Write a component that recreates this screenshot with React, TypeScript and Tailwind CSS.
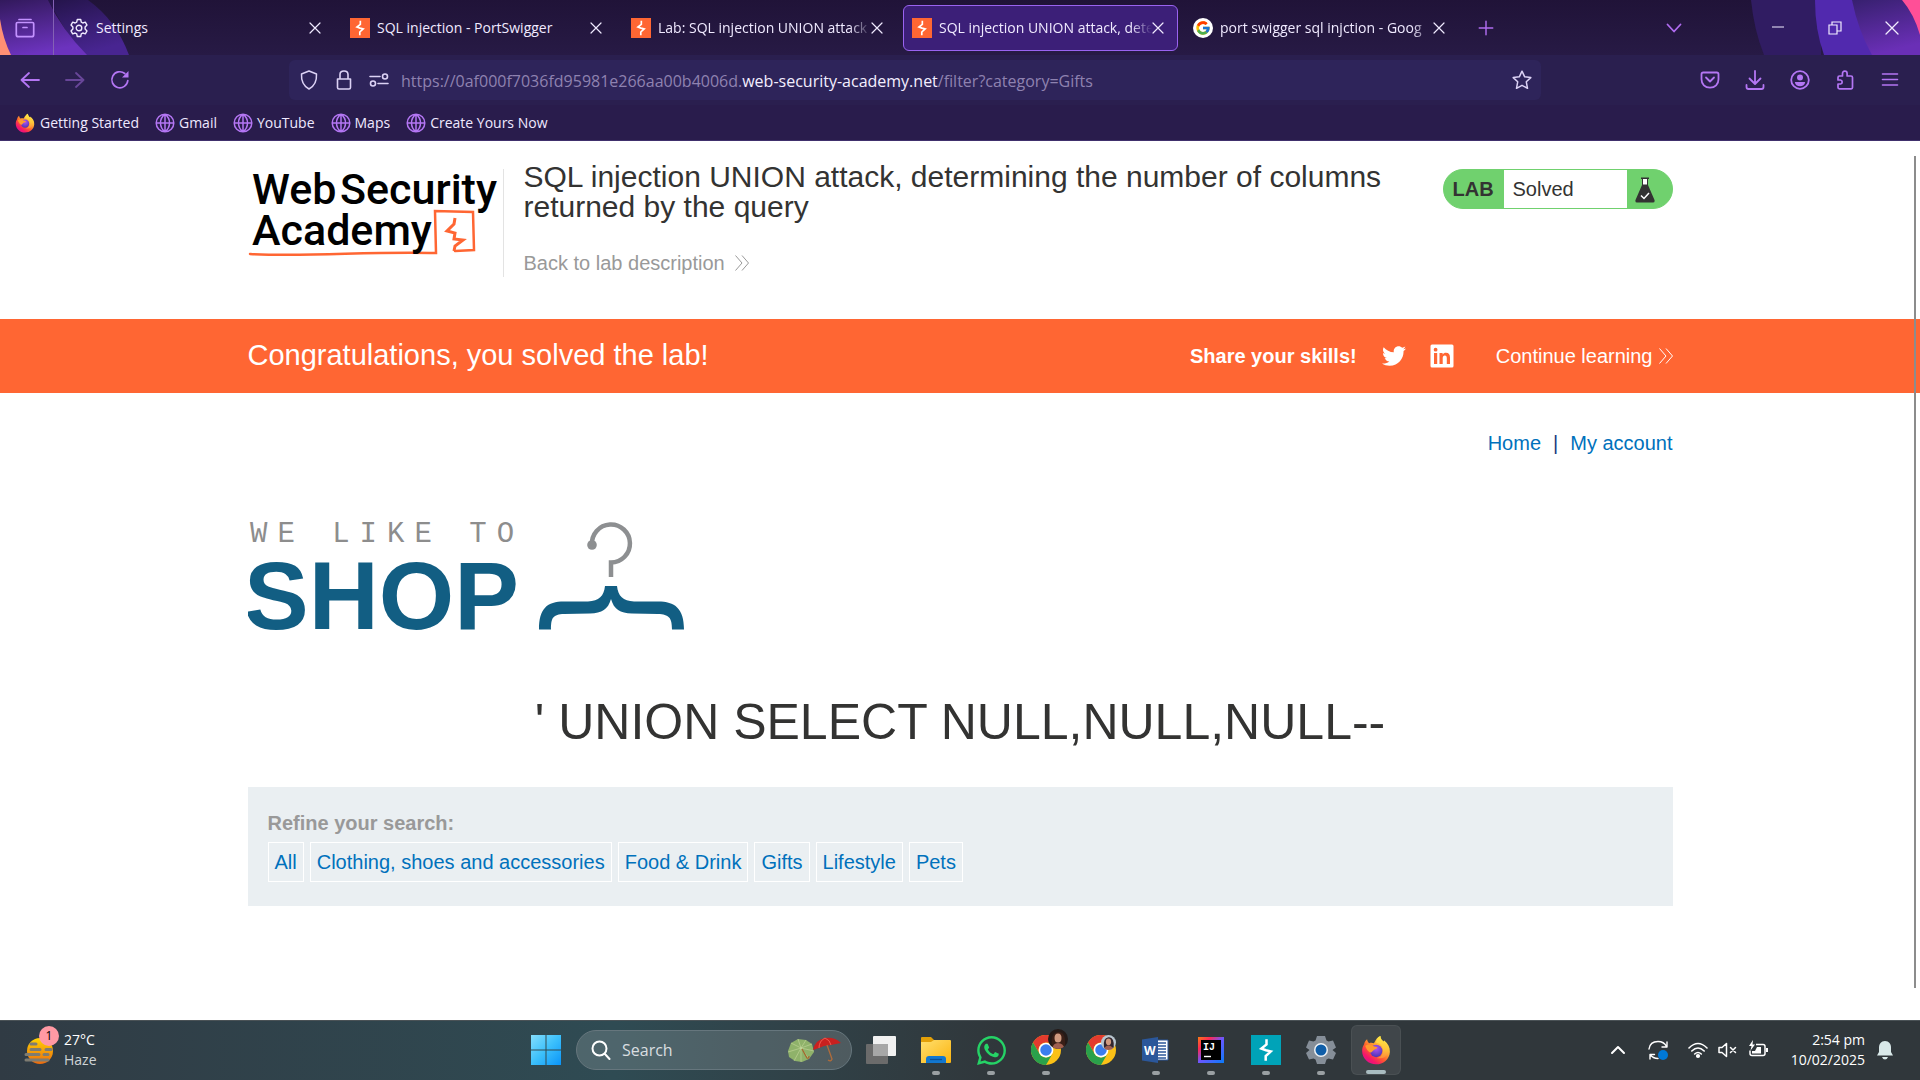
import React, { useId } from "react";
import { FcGoogle } from "react-icons/fc";
import { FaTwitter, FaWhatsapp } from "react-icons/fa";

const UI = "font-['Open_Sans','Noto_Sans',sans-serif]";

type SvgProps = { className?: string };

function Bolt({ className = "", bg = "#ff6633" }: SvgProps & { bg?: string }) {
  return (
    <svg viewBox="0 0 30 30" className={className} aria-hidden="true">
      <rect width="30" height="30" fill={bg} />
      <path d="M15.500 4.200V9.500L10.400 13.600 15 15.200 19.800 16.400 14.700 21V25.800" fill="none" stroke="#fff" strokeWidth="2.500" strokeLinejoin="miter" />
    </svg>
  );
}

function Firefox({ className = "" }: SvgProps) {
  const id = useId();
  return (
    <svg viewBox="0 0 32 32" className={className} aria-hidden="true">
      <defs>
        <linearGradient id={id + "a"} x1="0.85" y1="0.1" x2="0.2" y2="0.95">
          <stop offset="0" stopColor="#fff44f" />
          <stop offset="0.35" stopColor="#ffa930" />
          <stop offset="0.6" stopColor="#ff5a2e" />
          <stop offset="0.85" stopColor="#f5156c" />
          <stop offset="1" stopColor="#e0128a" />
        </linearGradient>
        <radialGradient id={id + "b"} cx="0.5" cy="0.3" r="0.7">
          <stop offset="0" stopColor="#b254f0" />
          <stop offset="1" stopColor="#4a35b5" />
        </radialGradient>
        <linearGradient id={id + "c"} x1="0.5" y1="0" x2="0.5" y2="1">
          <stop offset="0" stopColor="#ffe847" />
          <stop offset="0.6" stopColor="#ffc43a" />
          <stop offset="1" stopColor="#ff8a3a" />
        </linearGradient>
      </defs>
      <path d="M6.500 4.500c.2 2 1 3.200 2.300 4.200 1.600-.6 3.200-.5 5 .2C15.500 5.500 17.500 2 20.700 1c-.3 3 1.300 4.500 3.300 6.500.5-.4.600-1.100.500-2 4.200 3.500 6.500 7.500 6.300 12.500C30.300 26 23.800 31.200 16 31.200S1.200 25.200 1.200 17c0-3 .8-5.200 2.100-7.200.3-2 1.500-4 3.200-5.300z" fill={`url(#${id}a)`} />
      <circle cx="16.200" cy="17" r="6.600" fill={`url(#${id}b)`} />
      <path d="M20.700 1c-3.700 1.700-4.300 5-4.600 7.200 4.500.3 7.400 3.600 7.400 8 0 5.400-3 7.800-6.700 8.300 6 1.300 11-1.500 12.500-6.500 1-4-.8-7.500-4.300-10.500-2.500-2-4-3.500-4.300-6.500z" fill={`url(#${id}c)`} />
      <path d="M4.500 11.500c3-2.200 6.500-1.800 8.500.2 1.700 1 3 .8 4.500 1.300-.3 1.500-2 2-3.500 2.700-1.800 1.300-2.500 3.300-3.800 3-2.200-.5-4.700-3.700-5.700-7.200z" fill="#ff9a2e" />
    </svg>
  );
}

function Chrome({ className = "" }: SvgProps) {
  return (
    <svg viewBox="0 0 48 48" className={className} aria-hidden="true">
      <circle cx="24" cy="24" r="24" fill="#fbc116" />
      <path d="M3.200 12A24 24 0 0 1 44.800 12H24a12 12 0 0 0-10.400 18z" fill="#e33b2e" />
      <path d="M3.200 12A24 24 0 0 0 24 48L34.400 30A12 12 0 0 1 13.600 30z" fill="#2aa14b" />
      <circle cx="24" cy="24" r="11.800" fill="#fff" />
      <circle cx="24" cy="24" r="9.200" fill="#3b7ded" />
    </svg>
  );
}

function Line({ className = "", d, w = 1.5, box = 20 }: SvgProps & { d: string; w?: number; box?: number }) {
  return (
    <svg viewBox={`0 0 ${box} ${box}`} className={className} fill="none" stroke="currentColor" strokeWidth={w} strokeLinecap="round" strokeLinejoin="round" aria-hidden="true">
      <path d={d} />
    </svg>
  );
}

const GEAR = "M8.300 1.500h3.400l.6 2.600 1.500.9 2.500-.8 1.700 2.900-1.900 1.900v2l1.900 1.900-1.700 2.900-2.500-.8-1.500.9-.6 2.600H8.300l-.6-2.600-1.500-.9-2.500.8L2 12.900 3.900 11V9L2 7.100l1.700-2.900 2.500.8 1.500-.9zM10 7.200a2.800 2.800 0 1 0 0 5.600 2.800 2.800 0 0 0 0-5.600z";
const GLOBE = "M10 1.200a8.800 8.800 0 1 0 0 17.600 8.800 8.800 0 0 0 0-17.600zM1.200 10h17.600M10 1.200c-6 4.500-6 13.100 0 17.600M10 1.200c6 4.500 6 13.100 0 17.600M10 1.200v17.600";

type TabInfo = { title: string; icon: React.ReactNode; active?: boolean };

const tabs: TabInfo[] = [
  { title: "Settings", icon: <Line d={GEAR} w={1.4} className="size-5" /> },
  { title: "SQL injection - PortSwigger", icon: <Bolt className="size-5" /> },
  { title: "Lab: SQL injection UNION attack", icon: <Bolt className="size-5" /> },
  { title: "SQL injection UNION attack, dete", icon: <Bolt className="size-5" />, active: true },
  {
    title: "port swigger sql injction - Goog",
    icon: (
      <span className="flex size-5 items-center justify-center rounded-full bg-white">
        <FcGoogle className="size-4" />
      </span>
    ),
  },
];

function TabBar() {
  return (
    <div className="relative flex h-[55px] items-center bg-linear-to-b from-[#201338] to-[#271a45]">
      <svg className="absolute top-0 left-0 h-[55px] w-[160px]" viewBox="0 0 160 55" aria-hidden="true">
        <defs>
          <linearGradient id="l1" x1="0" y1="0" x2="0.3" y2="1">
            <stop offset="0" stopColor="#32195c" />
            <stop offset="1" stopColor="#6c33be" />
          </linearGradient>
          <linearGradient id="l2" x1="0" y1="0" x2="0.4" y2="1">
            <stop offset="0" stopColor="#24144a" />
            <stop offset="1" stopColor="#482591" />
          </linearGradient>
        </defs>
        <path d="M48 0h40q28 20 41 55H80z" fill="url(#l2)" />
        <path d="M0 0h48q14 30 39 55H0z" fill="url(#l1)" />
        <path d="M0 19q3 20 11 36H0z" fill="#ff8f74" />
      </svg>
      <svg className="absolute top-0 right-0 h-[55px] w-[180px]" viewBox="0 0 180 55" aria-hidden="true">
        <defs>
          <linearGradient id="r1" x1="0" y1="0" x2="0.3" y2="1">
            <stop offset="0" stopColor="#37206f" />
            <stop offset="1" stopColor="#6a2fb6" />
          </linearGradient>
        </defs>
        <path d="M11 0h70v55H24Q14 30 11 0z" fill="#301c62" />
        <path d="M75 0h45l20 55H84Q75 30 75 0z" fill="#5129ae" />
        <path d="M112 0h68v55h-48Q118 30 112 0z" fill="url(#r1)" />
        <path d="M162 0h18v35Q174 14 162 0z" fill="#ff4f97" />
      </svg>
      <button aria-label="Firefox View" className="relative flex h-full w-[54px] items-center border-r border-[#8461b5] pl-[15px] text-[#c392ff]">
        <Line className="size-5" w={1.7} d="M4 1.500h12M2.500 4.500h15q1.200 0 1.200 1.200v11q0 2-2 2H3.300q-2 0-2-2v-11q0-1.200 1.200-1.200zM8 9.500h4" />
      </button>
      <div role="tablist" className="relative flex items-center pl-[6px]">
        {tabs.map((t) => (
          <div
            key={t.title}
            className={
              "mr-[6px] flex h-[46px] w-[275px] items-center rounded-md border pr-[13px] pl-2 text-[#f0eaff] " +
              (t.active ? "border-[#9a63f0] bg-[#3c1f78]" : "border-transparent")
            }
          >
            <button role="tab" aria-selected={!!t.active} className="flex min-w-0 flex-1 items-center gap-[7px]">
              <span className="shrink-0">{t.icon}</span>
              <span className={"min-w-0 flex-1 text-left text-sm whitespace-nowrap " + (t.title.length > 30 ? "mask-r-from-90%" : "")}>{t.title}</span>
            </button>
            <button aria-label={"Close " + t.title} className="shrink-0">
              <Line className="size-3" box={12} w={1.2} d="M1 1l10 10M11 1L1 11" />
            </button>
          </div>
        ))}
      </div>
      <button aria-label="New tab" className="relative ml-3 text-[#b06cf0]">
        <Line className="size-[18px]" w={1.6} d="M10 2.500v15M2.500 10h15" />
      </button>
      <div className="relative ml-auto flex items-center text-[#f2edff]">
        <button aria-label="List all tabs" className="mr-[65px] text-[#b06cf0]">
          <Line className="size-5" w={1.8} d="M3.500 6.500l6.500 7 6.500-7" />
        </button>
        <button aria-label="Minimize" className="flex w-[57px] justify-center">
          <Line className="size-3" box={12} w={1.2} d="M0.500 5h11" />
        </button>
        <button aria-label="Restore" className="flex w-[57px] justify-center">
          <svg viewBox="0 0 14 14" className="size-[14px]" fill="none" stroke="currentColor" strokeWidth="1.200" aria-hidden="true">
            <path d="M1 4h8v9H1zM4 4V1h9v9H9" />
          </svg>
        </button>
        <button aria-label="Close" className="flex w-[57px] justify-center">
          <Line className="size-[14px]" box={14} w={1.3} d="M1 1l12 12M13 1L1 13" />
        </button>
      </div>
    </div>
  );
}

function NavBar() {
  return (
    <div className="flex h-[50px] items-center bg-[#2a1f4f] px-5 text-[#b476f4]">
      <button aria-label="Back" className="mr-[25px]"><Line className="size-5" w={1.8} d="M9 3l-7.500 7L9 17M1.500 10h17.500" /></button>
      <button aria-label="Forward" disabled className="mr-[25px] opacity-45"><Line className="size-5" w={1.8} d="M11 3l7.500 7-7.500 7M18.500 10H1" /></button>
      <button aria-label="Reload">
        <svg viewBox="0 0 20 20" className="size-5" fill="none" stroke="currentColor" strokeWidth="1.700" strokeLinecap="round" aria-hidden="true">
          <path d="M17.800 10.500a8 8 0 1 1-3-7" />
          <path d="M18.500 1v6.500H12z" fill="currentColor" stroke="none" />
        </svg>
      </button>
      <div className="relative ml-[159px] flex h-10 w-[1252px] shrink items-center rounded-md bg-[#2e245a] px-2 text-[#dcd2f5]">
        <Line className="mx-[2px] size-5" w={1.5} d="M10 1l7.500 3c.4 7-2 12-7.500 15-5.500-3-7.900-8-7.500-15z" />
        <Line className="mx-[13px] size-5" w={1.6} d="M3.500 9h13v8.500q0 1.500-1.500 1.500H5q-1.500 0-1.500-1.500zM6 9V4.500q0-3.500 4-3.500t4 3.500V9" />
        <Line className="mr-3 ml-[2px] size-5" w={1.6} d="M1 6.500h10M16 4a2.500 2.500 0 1 0 0 5 2.500 2.500 0 0 0 0-5zM9 13.500h10M4 11a2.500 2.500 0 1 0 0 5 2.500 2.500 0 0 0 0-5z" />
        <span className="pt-[2px] text-base whitespace-nowrap text-[#8e82b0]">
          https://0af000f7036fd95981e266aa00b4006d.<span className="text-[#f3eeff]">web-security-academy.net</span>/filter?category=Gifts
        </span>
        <input aria-label="Address" className="absolute inset-y-0 right-12 left-[110px] bg-transparent outline-none" />
        <button aria-label="Bookmark this page" className="mr-[1px] ml-auto">
          <Line className="size-5" w={1.5} d="M10 1.200l2.700 5.600 6.100.8-4.500 4.200 1.200 6.500L10 15.300l-5.500 3 1.200-6.500L1.200 7.600l6.100-.8z" />
        </button>
      </div>
      <div className="ml-auto flex items-center gap-[25px]">
        <button aria-label="Save to Pocket"><Line className="size-5" w={1.8} d="M3.200 2.500h13.600q1.700 0 1.700 1.700v5c0 5-3.500 8.500-8.500 8.500s-8.500-3.500-8.500-8.500v-5q0-1.700 1.700-1.700zM6 7.500l4 4 4-4" /></button>
        <button aria-label="Downloads"><Line className="size-5" w={1.8} d="M10 1v12.500M4.500 8.500l5.500 5.500 5.500-5.500M1.500 15v2q0 2 2 2h13q2 0 2-2v-2" /></button>
        <button aria-label="Account">
          <svg viewBox="0 0 20 20" className="size-5" aria-hidden="true">
            <circle cx="10" cy="10" r="8.800" fill="none" stroke="currentColor" strokeWidth="1.800" />
            <circle cx="10" cy="7.500" r="3" fill="currentColor" />
            <path d="M4.800 12h10.400c-.5 3-2.500 4.300-5.200 4.300S5.300 15 4.800 12z" fill="currentColor" />
          </svg>
        </button>
        <button aria-label="Extensions"><Line className="size-5" w={1.700} d="M7.500 6V3.500q0-2.300 2.300-2.300t2.300 2.300V6H16q1.500 0 1.500 1.500v10q0 1.300-1.300 1.300H4.500q-1.500 0-1.500-1.300V14h2.500q1.700-.2 1.700-1.900T5.500 10H3V7.500Q3 6 4.500 6z" /></button>
        <button aria-label="Menu"><Line className="size-5" w={1.6} d="M2.500 4h15M2.500 9.500h15M2.500 15h15" /></button>
      </div>
    </div>
  );
}

function Bookmarks() {
  return (
    <nav className="flex h-9 items-center gap-4 border-b border-[#40306c] bg-[#291c4c] pl-[15px] text-sm text-[#efe9ff]">
      <a href="#start" className="flex items-center gap-[5px]"><Firefox className="size-5" />Getting Started</a>
      {["Gmail", "YouTube", "Maps", "Create Yours Now"].map((b) => (
        <a key={b} href="#bookmark" className="flex items-center gap-1">
          <Line className="size-5 text-[#b476f4]" w={1.5} d={GLOBE} />
          {b}
        </a>
      ))}
    </nav>
  );
}

function AcademyLogo() {
  return (
    <svg viewBox="0 0 254 100" className="h-[100px] w-[254px] shrink-0" role="img" aria-label="Web Security Academy">
      <path d="M2 85c60 3 120-3 186-1l-1-42 38 1 1 38-19 1" fill="none" stroke="#ff6633" strokeWidth="2.500" strokeLinecap="round" />
      <path d="M207 49l-1 6-7 7 8 2-1 6 9 1-8 6-1 5" fill="none" stroke="#ff6633" strokeWidth="3" />
      <g fill="#000" fontFamily="Roboto, sans-serif" fontWeight="500" fontSize="43">
        <text x="4" y="35">Web</text>
        <text x="92" y="35">Security</text>
        <text x="4" y="76">Academy</text>
      </g>
    </svg>
  );
}

function Chevrons({ className = "" }: SvgProps) {
  return (
    <svg viewBox="0 0 14 16" className={"h-4 w-[14px] " + className} fill="none" stroke="currentColor" strokeWidth="1" aria-hidden="true">
      <path d="M0.500 0.500l6.500 7.500-6.500 7.500M7 0.500l6.500 7.500L7 15.500" />
    </svg>
  );
}

function LabHeader() {
  return (
    <header className="mx-auto flex h-[178px] w-[1425px] max-w-full items-start">
      <div className="mt-[28px] flex h-[108px] w-[256px] shrink-0 border-r border-[#e3e3e3]">
        <AcademyLogo />
      </div>
      <div className="ml-5 min-w-0 flex-1 pt-[21px]">
        <h2 className="max-w-[880px] text-[30px] leading-[30px] text-[#333332]">
          SQL injection UNION attack, determining the number of columns returned by the query
        </h2>
        <a href="#lab" className="mt-[27px] flex items-center gap-[10px] text-[20px] leading-7 text-[#999]">
          Back to lab description <Chevrons />
        </a>
      </div>
      <div className="mt-[28px] flex h-10 w-[230px] shrink-0 overflow-hidden rounded-[20px] border border-[#70d16e] bg-[#70d16e] text-[20px] text-[#333332]">
        <span className="flex w-[60px] items-center pl-[9px] font-bold">LAB</span>
        <span className="flex w-[123px] items-center bg-white pl-[9px]">Solved</span>
        <svg viewBox="0 0 20 26" className="mt-[7px] ml-2 h-[26px] w-5" aria-hidden="true">
          <path d="M7.500 1.500h5V8h-5z" fill="#fff" />
          <path d="M6 .5h8v1.500h-1V8l6.500 15q.6 2.500-1.500 2.500H2Q-.1 25.500.5 23L7 8V2H6zM8 2v5.500h4V2z" fill="#333332" fillRule="evenodd" />
          <path d="M6 18.500l3 3 5-5.500" stroke="#fff" strokeWidth="1.500" fill="none" />
        </svg>
      </div>
    </header>
  );
}

function Banner() {
  return (
    <section className="bg-[#ff6633] text-white">
      <div className="mx-auto flex h-[74px] w-[1425px] max-w-full items-center text-[20px]">
        <h4 className="text-[29px]">Congratulations, you solved the lab!</h4>
        <span className="ml-auto font-bold">Share your skills!</span>
        <a href="#twitter" aria-label="Share on Twitter" className="ml-[25px]"><FaTwitter className="size-6" /></a>
        <a href="#linkedin" aria-label="Share on LinkedIn" className="ml-6">
          <svg viewBox="0 0 24 24" className="size-6" aria-hidden="true">
            <rect x=".5" y=".5" width="23" height="23" rx="1.500" fill="#fff" />
            <path d="M4 9h3.200v11H4zM5.600 3.800a1.900 1.900 0 1 1 0 3.800 1.900 1.900 0 0 1 0-3.800zM9.500 9h3.100v1.500c.8-1.200 1.900-1.800 3.300-1.800 2.900 0 4.100 1.700 4.100 4.900V20h-3.200v-5.800c0-1.800-.5-2.700-1.900-2.700s-2.200 1-2.200 2.700V20H9.500z" fill="#ff6633" />
          </svg>
        </a>
        <a href="#next" className="ml-[42px] flex items-center gap-[6px]">Continue learning <Chevrons /></a>
      </div>
    </section>
  );
}

function ShopLogo() {
  return (
    <svg viewBox="0 0 440 120" className="h-[120px] w-[440px]" role="img" aria-label="We like to shop">
      <text x="2" y="27" fill="#8d8d8d" fontFamily="Liberation Mono, monospace" fontSize="29" letterSpacing="10">WE LIKE TO</text>
      <text x="-4" y="114" fill="#125e83" fontFamily="Liberation Sans, sans-serif" fontWeight="700" fontSize="97">SHOP</text>
      <circle cx="344" cy="30" r="4.800" fill="#8d8f91" />
      <path d="M344 30a19 19 0 1 1 19 17.500V62" fill="none" stroke="#8d8f91" strokeWidth="4.500" />
      <path d="M357 71h12c1 10 6 15 17 15.500h24c17 0 26 7 26 28h-12c0-12-3-15-14-15.500l-26-.5c-12-.5-18-4-21-14.500-3 10.500-9 14-21 14.500l-26 .5c-11 .5-13 3.500-13 15.500h-12c0-21 8-28 25-28h24c11-.5 16-5.500 17-15.500z" fill="#125e83" />
    </svg>
  );
}

function Shop() {
  return (
    <main className="mx-auto w-[1425px] max-w-full text-[20px]">
      <nav className="flex h-[100px] items-center justify-end gap-3 text-[#0071bc]">
        <a href="#home">Home</a>
        <span className="text-[#1c3a80]">|</span>
        <a href="#account">My account</a>
      </nav>
      <div className="mt-[22px]"><ShopLogo /></div>
      <h1 className="mt-[52px] text-center text-[50px] leading-[70px] text-[#333332]">' UNION SELECT NULL,NULL,NULL--</h1>
      <section className="mt-[30px] h-[119px] bg-[#eaeff2] px-5 pt-[22px]">
        <p className="leading-7 font-bold text-[#999]">Refine your search:</p>
        <div className="mt-[5px] flex flex-wrap gap-[6px]">
          {["All", "Clothing, shoes and accessories", "Food & Drink", "Gifts", "Lifestyle", "Pets"].map((f) => (
            <a key={f} href="#filter" className="border border-white px-[6px] leading-[38px] text-[#0071bc]">{f}</a>
          ))}
        </div>
      </section>
    </main>
  );
}

function Explorer() {
  return (
    <svg viewBox="0 0 30 30" className="size-[30px]" aria-hidden="true">
      <defs><linearGradient id="fo" x1="0" y1="0" x2="1" y2="1"><stop offset="0" stopColor="#ffdf6e" /><stop offset="1" stopColor="#fbb40f" /></linearGradient></defs>
      <path d="M0 3q0-1 1-1h9l3 3v5H0z" fill="#e3a008" />
      <path d="M0 7h10l3-2h16q1 0 1 1v21q0 1-1 1H0z" fill="url(#fo)" />
      <path d="M5 28v-4q0-3 3-3h14q3 0 3 3v4z" fill="#1277cf" /><path d="M9 24.500h12" stroke="#0a4f97" strokeWidth="1.300" />
    </svg>
  );
}

function Word() {
  return (
    <svg viewBox="0 0 30 30" className="size-[30px]" aria-hidden="true">
      <path d="M15 5h12v20H15z" fill="#fff" stroke="#2b579a" strokeWidth="1" />
      <path d="M17 8h8M17 11h8M17 14h8M17 17h8M17 20h8M17 23h8" stroke="#2b579a" strokeWidth="1.400" />
      <path d="M1 4.500L17 2v26L1 25.500z" fill="#2b579a" />
      <text x="3" y="20" fill="#fff" fontFamily="Open Sans, sans-serif" fontWeight="700" fontSize="12">W</text>
    </svg>
  );
}

function Idea() {
  return (
    <svg viewBox="0 0 30 30" className="size-[30px]" aria-hidden="true">
      <defs><linearGradient id="ij" x1="0" y1="0" x2="1" y2="1"><stop offset="0" stopColor="#f97a12" /><stop offset=".25" stopColor="#fe2857" /><stop offset=".5" stopColor="#6b57ff" /><stop offset="1" stopColor="#087cfa" /></linearGradient></defs>
      <rect x="2" y="2" width="26" height="26" fill="url(#ij)" />
      <rect x="5" y="5" width="20" height="20" fill="#000" />
      <text x="7" y="15" fill="#fff" fontFamily="Liberation Mono, monospace" fontWeight="700" fontSize="10">IJ</text>
      <path d="M8 21.500h7" stroke="#fff" strokeWidth="1.400" />
    </svg>
  );
}

function SettingsGear() {
  return (
    <svg viewBox="0 0 30 30" className="size-[30px]" aria-hidden="true">
      <path d="M11 1h8l1.500 4.500 2 1L27 5.500l3 7-3.500 2.500 3.500 3-3 6.500-4.500-1-2 1L19 29h-8l-1.500-4.500-2-1-4.500 1L0 18l3.500-3L0 12.500l3-7 4.500 1 2-1z" fill="#858e98" />
      <circle cx="15" cy="15" r="7" fill="#eef2f5" /><circle cx="15" cy="15" r="5.500" fill="#0f5ea8" />
    </svg>
  );
}

function Avatar({ className = "", hair, back }: SvgProps & { hair: string; back: string }) {
  return (
    <svg viewBox="0 0 20 20" className={"absolute rounded-full " + className} aria-hidden="true">
      <rect width="20" height="20" fill={back} />
      <path d="M4 17Q2 4 10 3t7 14z" fill={hair} />
      <ellipse cx="10" cy="9" rx="3.500" ry="4.500" fill="#d09a80" />
      <path d="M4 20q1-6 6-6t7 6z" fill="#a05f50" />
    </svg>
  );
}

const apps = [
  { name: "Task View", open: false, icon: (
    <svg viewBox="0 0 30 30" className="size-[30px]" aria-hidden="true">
      <rect x="7" y="1" width="23" height="20" rx="1" fill="#f1f1f1" /><rect x="0" y="9" width="22" height="20" rx="1" fill="#6b6b6b" /><path d="M7 9h15v12H7z" fill="#a7a7a7" />
    </svg>
  ) },
  { name: "File Explorer", open: true, icon: <Explorer /> },
  { name: "WhatsApp", open: true, icon: <FaWhatsapp className="size-[33px] text-[#25d366]" /> },
  { name: "Chrome", open: true, icon: <><Chrome className="size-[30px]" /><Avatar className="-top-[6px] left-[17px] size-5" hair="#3a1f17" back="#241a18" /></> },
  { name: "Chrome, second profile", open: false, icon: <><Chrome className="size-[30px]" /><Avatar className="top-0 left-[15px] size-[15px]" hair="#33262e" back="#b9c6cf" /></> },
  { name: "Word", open: true, icon: <Word /> },
  { name: "IntelliJ IDEA", open: true, icon: <Idea /> },
  { name: "Burp Suite", open: true, icon: <Bolt className="size-[30px]" bg="#00a3b8" /> },
  { name: "Settings", open: true, icon: <SettingsGear /> },
];

function Umbrellas() {
  return (
    <svg viewBox="0 0 54 26" className="h-[26px] w-[54px]" aria-hidden="true">
      <path d="M1 14L4 6l7-4 8 1 6 4 2 8-5 7-7 3-7-1-6-4z" fill="#8fb26a" />
      <path d="M14 11L4 6M14 11l-3-9M14 11l5-8M14 11l11-4M14 11l13 3M14 11l8 11M14 11v14M14 11L7 24M14 11L1 15" stroke="#d0dfa6" strokeWidth=".5" />
      <path d="M15 12l5 9q2 1 2-2" stroke="#a5632a" strokeWidth="1.200" fill="none" />
      <path d="M26 13Q28 3 38 1q10-1 16 5l-5 1-5 1-7 1-5 2z" fill="#c9201f" />
      <path d="M38 1q-6 3-6 10M38 1q5 2 6 7" stroke="#ef5a4f" strokeWidth="1" fill="none" />
      <path d="M40 8l5 14q-1 3-4 1" stroke="#b06c3a" strokeWidth="1.300" fill="none" />
    </svg>
  );
}

function Taskbar() {
  return (
    <footer className="flex h-[60px] items-center border-t border-[#4a5256] bg-linear-to-r from-[#303b44] via-[#2f4b53] via-32% to-[#30373b] to-52% pb-[1px] text-white">
      <button className="flex w-[521px] items-center pl-6 text-left">
        <span className="relative block">
          <svg viewBox="0 0 30 32" className="h-8 w-[30px]" aria-hidden="true">
            <defs><linearGradient id="hz" x1="0" y1="0" x2="0" y2="1"><stop offset="0" stopColor="#ffd400" /><stop offset="1" stopColor="#ea6a10" /></linearGradient></defs>
            <circle cx="16" cy="17" r="13" fill="url(#hz)" />
            <path d="M7 10h5M7 15.500h9M22 15.500h5M2 20.500h13M20 20.500h4M2 26h22" stroke="#7e7c72" strokeWidth="3" strokeLinecap="round" />
          </svg>
          <span className="absolute -top-2 left-[15px] flex size-5 items-center justify-center rounded-full bg-[#ff99a4] text-xs text-black">1</span>
        </span>
        <span className="ml-[10px] text-sm leading-5"><span className="block">27°C</span><span className="block text-[#cfd4d6]">Haze</span></span>
      </button>
      <button aria-label="Start" className="flex w-[50px] justify-center">
        <svg viewBox="0 0 30 30" className="size-[30px]" aria-hidden="true">
          <defs><linearGradient id="win" x1="0" y1="0" x2="1" y2="1"><stop offset="0" stopColor="#85defc" /><stop offset=".5" stopColor="#3cc0fb" /><stop offset="1" stopColor="#0a94f8" /></linearGradient></defs>
          <path d="M0 0h14.500v14.500H0zM15.500 0H30v14.500H15.500zM0 15.500h14.500V30H0zM15.500 15.500H30V30H15.500z" fill="url(#win)" />
        </svg>
      </button>
      <label className="mr-1 ml-[5px] flex h-10 w-[276px] items-center rounded-full border border-[#66767d] bg-white/15 pr-[10px] pl-[14px]">
        <Line className="size-5 shrink-0" w={2} d="M8.500 1.500a7 7 0 1 0 0 14 7 7 0 0 0 0-14zM13.500 13.500l5 5.500" />
        <input aria-label="Search" placeholder="Search" className="ml-[11px] w-0 flex-1 bg-transparent text-base outline-none placeholder:text-[#d9dee0]" />
        <Umbrellas />
      </label>
      <div className="flex gap-[5px]">
        {apps.map((a) => (
          <button key={a.name} aria-label={a.name} className="relative flex h-[50px] w-[50px] items-center justify-center">
            <span className="relative">{a.icon}</span>
            {a.open && <span className="absolute bottom-0 h-1 w-2 rounded-full bg-[#9aa0a3]" />}
          </button>
        ))}
        <button aria-label="Firefox" className="relative flex h-[50px] w-[50px] items-center justify-center rounded-md border border-white/5 bg-white/8">
          <Firefox className="size-[30px]" />
          <span className="absolute bottom-0 h-1 w-5 rounded-full bg-[#a9bcc0]" />
        </button>
      </div>
      <div className="ml-auto flex items-center pr-[25px]">
        <button aria-label="Show hidden icons"><Line className="size-4" box={16} w={2} d="M2 11l6-6 6 6" /></button>
        <span className="relative ml-[22px]">
          <Line className="size-5" w={1.400} d="M1 9q1-7.500 9-7.500 6 0 8.500 5M19 2v5h-5M2 14.500V19M2 14.500h4.500M2 14.500q3 4 8 4" />
          <span className="absolute right-0 bottom-0 size-[10px] rounded-full bg-[#0078d7]" />
        </span>
        <button aria-label="Network, volume and battery" className="ml-5 flex items-center gap-[10px]">
          <svg viewBox="0 0 20 20" className="size-5" fill="none" stroke="#fff" strokeWidth="1.600" strokeLinecap="round" aria-hidden="true">
            <path d="M1 8q9-9 18 0M3.800 11q6.200-6 12.400 0M6.700 14q3.300-3 6.600 0" /><circle cx="10" cy="16" r="1.300" fill="#fff" />
          </svg>
          <Line className="size-5" w={1.500} d="M1 7.500h3L8.500 3.500v13L4 12.500H1zM12.500 7.500l5 5M17.500 7.500l-5 5" />
          <svg viewBox="0 0 20 20" className="size-5" fill="none" stroke="#fff" strokeWidth="1.500" aria-hidden="true">
            <path d="M8 4.500h7q2 0 2 2v7q0 2-2 2H4q-2 0-2-2v-3" /><path d="M19 8v4" strokeWidth="2" /><path d="M9 7h4v6.500H4V11h3z" fill="#fff" stroke="none" /><path d="M5 0L1 6h2.500l-1 4.500L7 4.500H4.500z" fill="#fff" stroke="none" />
          </svg>
        </button>
        <button className="ml-[23px] text-right text-sm leading-5"><span className="block">2:54 pm</span><span className="block">10/02/2025</span></button>
        <button aria-label="Notifications" className="ml-[10px]">
          <svg viewBox="0 0 20 20" className="size-5" fill="#d9e9e9" aria-hidden="true"><path d="M10 1c4 0 6 3 6 6.500V12l2 3.500H2L4 12V7.500C4 4 6 1 10 1zM7 17h6q-1 2.500-3 2.500T7 17z" /></svg>
        </button>
      </div>
    </footer>
  );
}

export default function App() {
  return (
    <div className="flex min-h-screen flex-col overflow-x-hidden bg-white">
      <div className={UI}>
        <TabBar />
        <NavBar />
        <Bookmarks />
      </div>
      <div className="relative flex-1 font-['Liberation_Sans',Arial,sans-serif]">
        <LabHeader />
        <Banner />
        <Shop />
        <div className="absolute top-[15px] right-1 bottom-8 w-[2px] bg-[#8c8c8c]" />
      </div>
      <div className={UI}>
        <Taskbar />
      </div>
    </div>
  );
}
